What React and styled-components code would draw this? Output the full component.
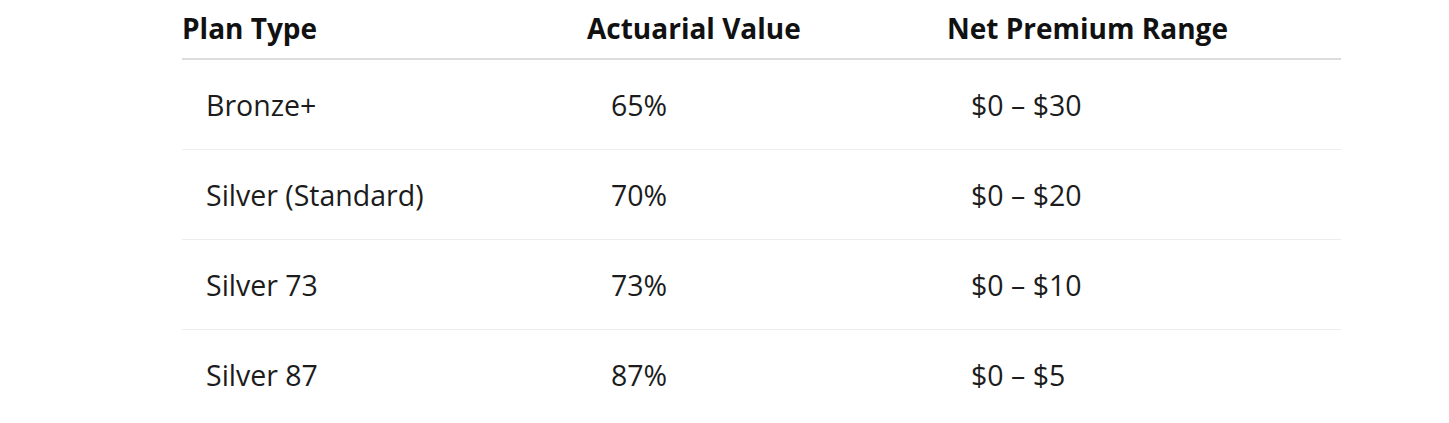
import React from 'react';
import styled, { createGlobalStyle } from 'styled-components';

const GlobalStyle = createGlobalStyle`
    *, *::before, *::after {
        box-sizing: border-box;
    }
    body {
        margin: 0;
        background: #ffffff;
        font-family: "Open Sans", "Noto Sans", sans-serif;
        color: #1a1a1a;
    }
`;

const Page = styled.div`
    padding: 0 108px 0 182px;
`;

const Table = styled.div`
    display: grid;
    grid-template-columns: 405px 360px 1fr;
`;

const HeadCell = styled.div`
    font-weight: 700;
    font-size: 28px;
    color: #111111;
    height: 60px;
    display: flex;
    align-items: center;
    padding-bottom: 3px;
    border-bottom: 2px solid #dcdcdc;
    white-space: nowrap;
`;

const Cell = styled.div`
    font-size: 28.5px;
    color: #1c1c1c;
    height: 90px;
    display: flex;
    align-items: center;
    padding-left: 24px;
    border-bottom: ${({ $last }) => ($last ? 'none' : '1px solid #ededed')};
    white-space: nowrap;
`;

const rows = [
    ['Bronze+', '65%', '$0 – $30'],
    ['Silver (Standard)', '70%', '$0 – $20'],
    ['Silver 73', '73%', '$0 – $10'],
    ['Silver 87', '87%', '$0 – $5'],
];

export default function App() {
    return (
        <>
            <GlobalStyle />
            <Page>
                <Table>
                    <HeadCell>Plan Type</HeadCell>
                    <HeadCell>Actuarial Value</HeadCell>
                    <HeadCell>Net Premium Range</HeadCell>
                    {rows.map((row, i) =>
                        row.map((val, j) => (
                            <Cell key={`${i}-${j}`} $last={i === rows.length - 1}>
                                {val}
                            </Cell>
                        ))
                    )}
                </Table>
            </Page>
        </>
    );
}
